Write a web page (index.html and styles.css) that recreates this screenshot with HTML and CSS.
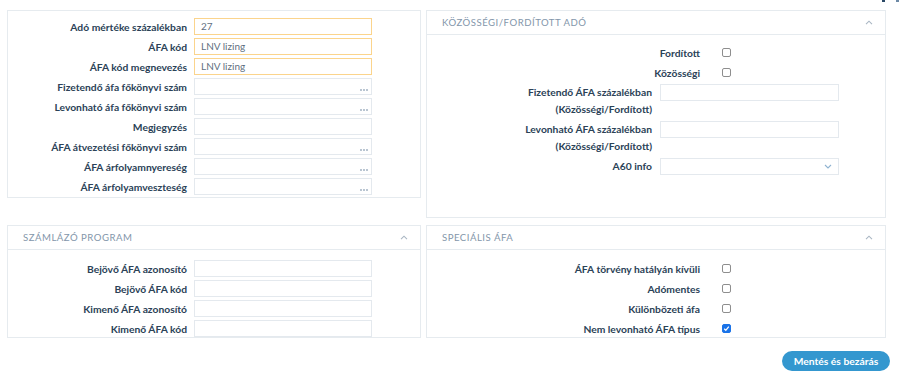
FILE: index.html
```html
<!DOCTYPE html>
<html lang="hu">
<head>
<meta charset="utf-8">
<title>ÁFA kód</title>
<link rel="stylesheet" href="styles.css">
</head>
<body>
<div class="corner"><span class="c1"></span><span class="c2"></span></div>
<div class="page">
  <div class="grid">
    <section class="panel panel-main">
      <div class="form">
        <div class="row"><label>Adó mértéke százalékban</label><div class="field hl">27</div></div>
        <div class="row"><label>ÁFA kód</label><div class="field hl">LNV lizing</div></div>
        <div class="row"><label>ÁFA kód megnevezés</label><div class="field hl">LNV lizing</div></div>
        <div class="row"><label>Fizetendő áfa főkönyvi szám</label><div class="field lookup"><span class="dots"><i></i><i></i><i></i></span></div></div>
        <div class="row"><label>Levonható áfa főkönyvi szám</label><div class="field lookup"><span class="dots"><i></i><i></i><i></i></span></div></div>
        <div class="row"><label>Megjegyzés</label><div class="field"></div></div>
        <div class="row"><label>ÁFA átvezetési főkönyvi szám</label><div class="field lookup"><span class="dots"><i></i><i></i><i></i></span></div></div>
        <div class="row"><label>ÁFA árfolyamnyereség</label><div class="field lookup"><span class="dots"><i></i><i></i><i></i></span></div></div>
        <div class="row"><label>ÁFA árfolyamveszteség</label><div class="field lookup"><span class="dots"><i></i><i></i><i></i></span></div></div>
      </div>
    </section>

    <section class="panel panel-tall">
      <header class="head"><span class="title">Közösségi/Fordított adó</span><svg class="chev" width="8" height="5" viewBox="0 0 8 5"><polyline points="1,4.2 4,1.2 7,4.2" fill="none" stroke="#a9b6c3" stroke-width="1.1"/></svg></header>
      <div class="form form-right">
        <div class="crow"><label>Fordított</label><span class="cb"></span></div>
        <div class="crow"><label>Közösségi</label><span class="cb"></span></div>
        <div class="row2"><label>Fizetendő ÁFA százalékban<br>(Közösségi/Fordított)</label><div class="field"></div></div>
        <div class="row2"><label>Levonható ÁFA százalékban<br>(Közösségi/Fordított)</label><div class="field"></div></div>
        <div class="row2 single"><label>A60 info</label><div class="field select"><svg width="8" height="5" viewBox="0 0 8 5"><polyline points="1,1 4,4 7,1" fill="none" stroke="#8fb3d1" stroke-width="1.1"/></svg></div></div>
      </div>
    </section>

    <section class="panel">
      <header class="head"><span class="title">Számlázó program</span><svg class="chev" width="8" height="5" viewBox="0 0 8 5"><polyline points="1,4.2 4,1.2 7,4.2" fill="none" stroke="#a9b6c3" stroke-width="1.1"/></svg></header>
      <div class="form form-pad">
        <div class="row"><label>Bejövő ÁFA azonosító</label><div class="field"></div></div>
        <div class="row"><label>Bejövő ÁFA kód</label><div class="field"></div></div>
        <div class="row"><label>Kimenő ÁFA azonosító</label><div class="field"></div></div>
        <div class="row"><label>Kimenő ÁFA kód</label><div class="field"></div></div>
      </div>
    </section>

    <section class="panel">
      <header class="head"><span class="title">Speciális ÁFA</span><svg class="chev" width="8" height="5" viewBox="0 0 8 5"><polyline points="1,4.2 4,1.2 7,4.2" fill="none" stroke="#a9b6c3" stroke-width="1.1"/></svg></header>
      <div class="form form-pad">
        <div class="crow"><label>ÁFA törvény hatályán kívüli</label><span class="cb"></span></div>
        <div class="crow"><label>Adómentes</label><span class="cb"></span></div>
        <div class="crow"><label>Különbözeti áfa</label><span class="cb"></span></div>
        <div class="crow"><label>Nem levonható ÁFA típus</label><span class="cb on"><svg width="9" height="9" viewBox="0 0 9 9"><polyline points="2.2,4.8 3.8,6.3 6.8,2.6" fill="none" stroke="#fff" stroke-width="1.3"/></svg></span></div>
      </div>
    </section>
  </div>
  <div class="actions"><button class="btn">Mentés és bezárás</button></div>
</div>
</body>
</html>
```

FILE: styles.css
```css
* { box-sizing: border-box; }
html, body { margin: 0; padding: 0; background: #fff; }
body {
  font-family: Lato, "Open Sans", "DejaVu Sans", sans-serif;
  color: #2b4257;
  width: 900px;
  height: 376px;
  overflow: hidden;
  position: relative;
}
.corner { position: absolute; top: 0; left: 882px; height: 3px; width: 18px; }
.corner .c1 { position: absolute; left: 0; top: 0; width: 3px; height: 2px; background: #2a4866; }
.corner .c2 { position: absolute; left: 14px; top: 0; width: 3px; height: 2px; background: #6d8aa6; }

.page { padding: 10px 0 0 7px; }
.grid {
  display: grid;
  grid-template-columns: 414px 460px;
  column-gap: 5px;
  row-gap: 7px;
  align-items: start;
}
.panel {
  border: 1px solid #e6ebef;
  background: #fff;
}
.panel-main { height: 188px; }
.panel-tall { height: 208px; }

.head {
  height: 24px;
  border-bottom: 1px solid #e6ebef;
  display: flex;
  align-items: center;
  justify-content: space-between;
  padding: 0 12px 0 15px;
}
.title {
  text-transform: uppercase;
  font-size: 9.6px;
  letter-spacing: 0.5px;
  color: #8396aa;
}
.chev { display: block; }

.form { display: flex; flex-direction: column; gap: 3px; padding: 7px 0 0 0; }
.form-pad { padding-top: 10px; }
.form-right { padding-top: 9px; }

label {
  font-weight: 700;
  font-size: 10.3px;
  color: #2b4257;
  text-align: right;
  white-space: nowrap;
}
.row {
  display: grid;
  grid-template-columns: 179px 178px;
  column-gap: 7px;
  align-items: center;
  height: 17px;
}
.row2 {
  display: grid;
  grid-template-columns: 225px 179px;
  column-gap: 8px;
  align-items: start;
}
.row2 label { line-height: 17px; }
.row2.single { align-items: center; height: 17px; }
.field {
  height: 17px;
  border: 1px solid #e4e9ee;
  background: #fff;
  font-size: 10px;
  color: #5f6f7f;
  padding: 0 6px;
  line-height: 15px;
}
.field.hl { border-color: #fbd48c; }
.field.lookup {
  display: flex;
  justify-content: flex-end;
  align-items: flex-end;
  padding: 0 3px 3px 0;
}
.dots { display: flex; gap: 1px; }
.dots i { display: block; width: 2px; height: 2px; background: #a3b3c3; border-radius: 1px; }
.field.select {
  display: flex;
  justify-content: flex-end;
  align-items: center;
  padding-right: 6px;
}
.field.select svg { display: block; }

.crow {
  display: grid;
  grid-template-columns: 273px 9px;
  column-gap: 22px;
  align-items: center;
  height: 17px;
}
.cb {
  width: 9px;
  height: 9px;
  border: 1px solid #8e8e8e;
  border-radius: 2px;
  background: #fff;
  display: block;
}
.cb.on { background: #1a73e8; border-color: #1a73e8; }
.cb.on svg { display: block; margin: -1px 0 0 -1px; }

.actions { display: flex; justify-content: flex-end; padding: 13px 10px 0 0; }
.btn {
  width: 108px;
  height: 20px;
  border: none;
  border-radius: 10px;
  background: #3497cf;
  color: #fff;
  font-family: Lato, "Open Sans", sans-serif;
  font-weight: 700;
  font-size: 10.3px;
  padding: 0;
}
```
